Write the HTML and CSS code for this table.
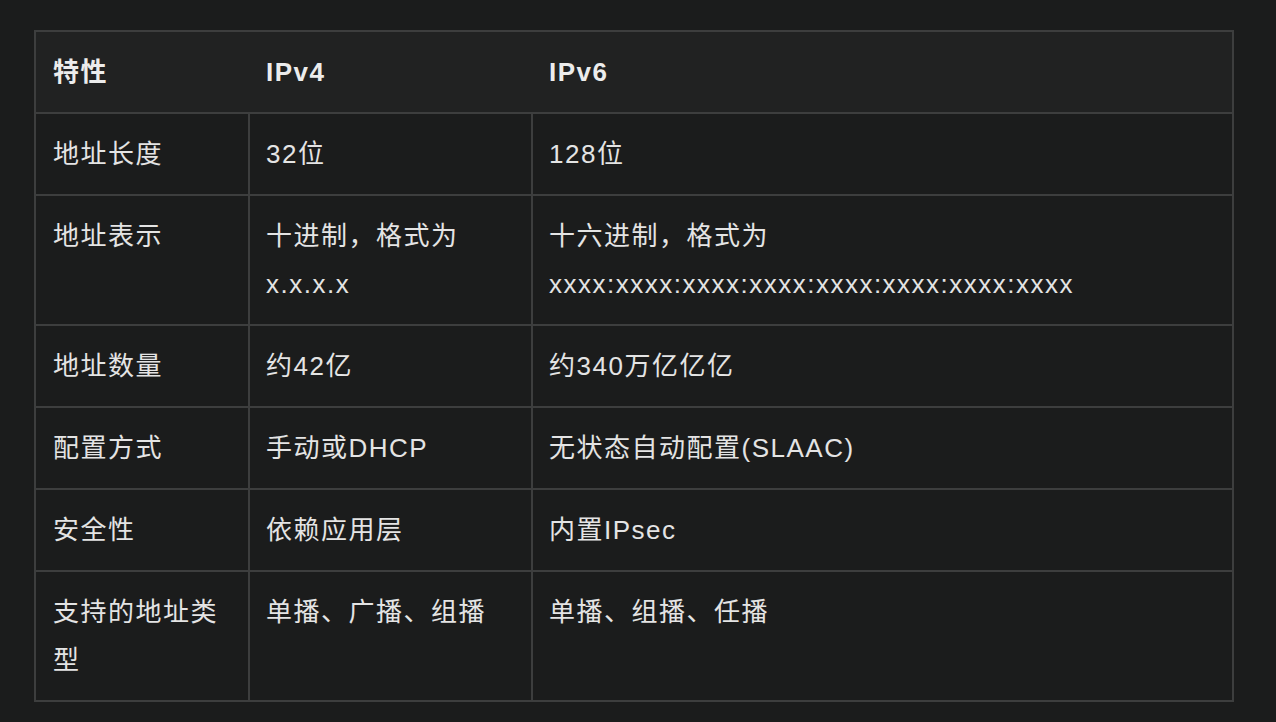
FILE: index.html
```html
<!DOCTYPE html>
<html lang="zh-CN">
<head>
<meta charset="utf-8">
<link rel="stylesheet" href="styles.css">
</head>
<body>
<div class="wrap">
<table class="cmp">
<colgroup><col class="c1"><col class="c2"><col class="c3"></colgroup>
<thead>
<tr><th>特性</th><th>IPv4</th><th>IPv6</th></tr>
</thead>
<tbody>
<tr><td>地址长度</td><td>32位</td><td>128位</td></tr>
<tr><td>地址表示</td><td>十进制，格式为<br>x.x.x.x</td><td>十六进制，格式为<br>xxxx:xxxx:xxxx:xxxx:xxxx:xxxx:xxxx:xxxx</td></tr>
<tr><td>地址数量</td><td>约42亿</td><td>约340万亿亿亿</td></tr>
<tr><td>配置方式</td><td>手动或DHCP</td><td>无状态自动配置(SLAAC)</td></tr>
<tr><td>安全性</td><td>依赖应用层</td><td>内置IPsec</td></tr>
<tr><td>支持的地址类型</td><td>单播、广播、组播</td><td>单播、组播、任播</td></tr>
</tbody>
</table>
</div>
</body>
</html>
```
FILE: styles.css
```css
html, body {
  margin: 0;
  padding: 0;
  background: #1b1c1c;
}
.wrap {
  padding: 30px 34px;
}
.cmp {
  width: 1200px;
  table-layout: fixed;
  border-collapse: collapse;
  border: 2px solid #3d3e3e;
  font-family: "Liberation Sans", "Noto Sans CJK SC", sans-serif;
  font-size: 26px;
  line-height: 48px;
  letter-spacing: 1.5px;
  color: #e4e4e4;
}
.c1 { width: 214px; }
.c2 { width: 283px; }
.cmp th {
  background: #212222;
  text-align: left;
  font-weight: 600;
  color: #ececec;
  padding: 16px 16px 16px 17px;
  border-bottom: 2px solid #3d3e3e;
}
.cmp td {
  vertical-align: top;
  padding: 16px 16px 16px 16px;
  border: 2px solid #3d3e3e;
}
.cmp td:first-child,
.cmp th:first-child {
  padding-left: 17px;
}
```
